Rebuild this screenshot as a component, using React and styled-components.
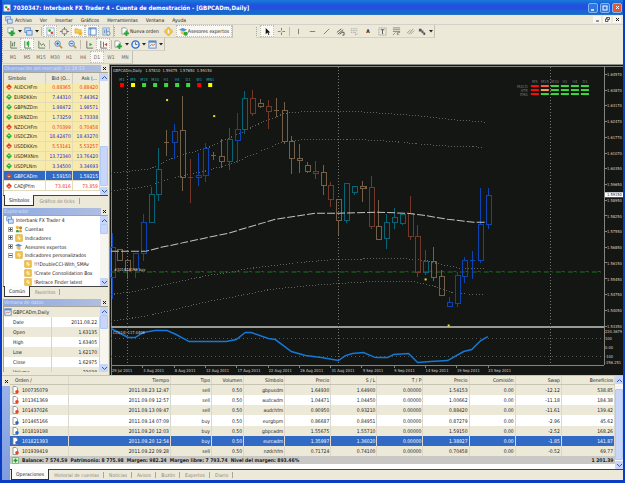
import React, { useState } from 'react'
import styled, { createGlobalStyle } from 'styled-components'

const GlobalStyle = createGlobalStyle`
    * { box-sizing: border-box; }
    body {
        margin: 0;
        background-color: #ece9d8;
        font-family: "DejaVu Sans Condensed", "Liberation Sans", sans-serif;
        font-size: 5px;
        line-height: 8px;
        color: #222;
    }
    button {
        font: inherit;
        color: inherit;
        border: none;
        background: none;
        padding: 0;
        margin: 0;
    }
    svg { display: block; flex: none; }
`;
const Window = styled.div`
    min-height: 100vh;
    display: flex;
    flex-direction: column;
    border: solid #0a3cc4;
    border-width: 0 2px 3px 2px;
    background-color: #ece9d8;
`;
const TitleBar = styled.header`
    height: 15px;
    display: flex;
    align-items: center;
    gap: 2px;
    padding: 0 1px;
    background: linear-gradient(#1c7ade 0, #1668d4 3px, #2450e2 5px, #2450e2 9px, #1668cc 11px, #1668cc 14px, #3a78c8 15px);
    color: white;
`;
const Title = styled.h1`
    flex: 1;
    margin: 0;
    font-size: 6px;
    font-weight: bold;
    white-space: nowrap;
`;
const CaptionButton = styled.button`
    width: 10px;
    height: 10px;
    display: grid;
    place-items: center;
    border: 1px solid #8ab4f0;
    border-radius: 2px;
    background-color: ${props => props.$close ? '#e8562c' : '#2a78e0'};
`;
const MenuBar = styled.nav`
    height: 10px;
    display: flex;
    align-items: center;
    gap: 8px;
    padding: 0 2px 0 3px;
    border-bottom: 1px solid #d4d0cc;
    & > svg { margin-right: -6px; }
`;
const MenuButton = styled.button`
    white-space: nowrap;
`;
const MdiButtons = styled.div`
    margin-left: auto;
    display: flex;
    gap: 2px;
    & button {
        width: 8px;
        height: 7px;
        display: grid;
        place-items: center;
        background-color: #f8f7f2;
    }
`;
const ToolbarRow = styled.div`
    height: 13px;
    display: flex;
    align-items: stretch;
`;
const Toolbar = styled.div`
    display: flex;
    align-items: center;
    border-right: 1px solid #c4c0b4;
    border-bottom: 1px solid #d4d0c4;
    margin-left: ${props => props.$apart ? '23px' : '0'};
    &::before {
        content: '';
        width: 2px;
        height: 9px;
        margin-right: 1px;
        border-left: 1px dotted #a8a498;
    }
`;
const Separator = styled.span`
    width: 1px;
    height: 9px;
    margin: 0 1px;
    background-color: #c0bcae;
`;
const ToolButton = styled.button`
    min-width: 14px;
    height: 12px;
    padding: 0 ${props => props.$labelled ? '3px' : '1px'};
    display: flex;
    align-items: center;
    justify-content: center;
    gap: ${props => props.$labelled ? '0' : '2px'};
    white-space: nowrap;
    color: ${props => props.$period ? '#666' : '#222'};
    ${props => props.$on && `
        background-color: #f9f8f3;
        outline: 1px dotted #c0bcb0;
        outline-offset: -1px;
    `}
`;
const Workspace = styled.main`
    flex: 1;
    display: flex;
    align-items: stretch;
`;
const Sidebar = styled.aside`
    width: 107px;
    flex: none;
    padding: 1px 1px 0 1px;
    display: flex;
    flex-direction: column;
    gap: 2px;
`;
const Panel = styled.section`
    display: flex;
    flex-direction: column;
`;
const PanelTitle = styled.h2`
    height: 7px;
    margin: 0;
    padding-left: 1px;
    display: flex;
    align-items: center;
    justify-content: space-between;
    font-size: 5px;
    line-height: 7px;
    font-weight: normal;
    white-space: nowrap;
    color: #dde3ee;
    background: linear-gradient(90deg, #8ea9e4, #b2bfdf);
    & button {
        width: 7px;
        height: 7px;
        display: grid;
        place-items: center;
        background-color: #ece9d8;
    }
`;
const PanelBody = styled.div`
    height: ${props => props.$height}px;
    display: flex;
    align-items: stretch;
    border: solid #a8a496;
    border-width: 1px 0 0 1px;
    background-color: white;
    overflow: hidden;
`;
const MarketTable = styled.table`
    flex: 1;
    align-self: flex-start;
    height: 118px;
    table-layout: fixed;
    border-collapse: collapse;
    & th {
        width: 27px;
        height: 10px;
        padding: 0 2px;
        font-weight: normal;
        text-align: right;
        background-color: #ece9d8;
        border-right: 1px solid #d0ccbe;
    }
    & th:first-child {
        width: 41px;
        text-align: left;
        padding-left: 4px;
    }
    & td {
        padding: 0 1px;
        text-align: right;
        border-right: 1px solid #e4dcb8;
        border-bottom: 1px solid #e4dcb8;
    }
`;
const MarketRow = styled.tr`
    color: ${props => props.$selected ? 'white' : props.$up ? '#2424d0' : '#f03020'};
    background-color: ${props => props.$selected ? '#316ac5' : props.$plain ? 'white' : '#f8ebaa'};
    & td:first-child {
        color: ${props => props.$selected ? 'white' : '#222'};
    }
`;
const SymbolCell = styled.span`
    display: flex;
    align-items: center;
    gap: 2px;
    padding-left: 1px;
`;
const ScrollTrack = styled.div`
    width: 8px;
    flex: none;
    display: flex;
    flex-direction: column;
    background-color: #f6f5f0;
`;
const ScrollArrow = styled.button`
    height: 8px;
    flex: none;
    display: grid;
    place-items: center;
    border-radius: 1px;
    background-color: #c6d5fa;
`;
const ScrollSpace = styled.div`
    flex: ${props => props.$grow} 0 0;
`;
const ScrollThumb = styled.div`
    flex: ${props => props.$grow} 0 0;
    border: 1px solid #b4c8f4;
    border-radius: 1px;
    background-color: #c8d6fb;
`;
const Tabs = styled.div`
    height: 11px;
    display: flex;
    align-items: stretch;
    border-top: 1px solid #444;
    padding-left: 1px;
`;
const Tab = styled.button`
    padding: 0 5px;
    white-space: nowrap;
    color: #8c887c;
    position: relative;
    &::after {
        content: '';
        position: absolute;
        right: 0;
        top: 2px;
        height: 6px;
        border-right: 1px solid #aaa698;
    }
    ${props => props.$active && `
        margin-top: -1px;
        padding: 0 4px;
        color: #222;
        background-color: #fcfcfa;
        border: solid #333;
        border-width: 0 1px 1px 1px;
        &&::after { display: none; }
    `}
`;
const Tree = styled.ul`
    flex: 1;
    min-width: 0;
    height: 70px;
    margin: 0;
    padding: 0 0 0 1px;
    list-style: none;
    display: grid;
    grid-auto-rows: 1fr;
    overflow: hidden;
`;
const TreeItem = styled.li`
    display: flex;
    align-items: center;
    gap: 2px;
    white-space: nowrap;
    padding-left: ${props => props.$level === 0 ? 1 : props.$level === 1 ? 3 : 19}px;
`;
const DataList = styled.div`
    flex: 1;
`;
const DataHeading = styled.div`
    height: 10px;
    display: flex;
    align-items: center;
    gap: 1px;
    background-color: #ece9d8;
`;
const DataTable = styled.table`
    width: 100%;
    border-collapse: collapse;
    table-layout: fixed;
    & th, & td {
        height: 10px;
        padding: 0 2px 0 9px;
        font-weight: normal;
        text-align: left;
        border-right: 1px solid #d8d5c8;
    }
    & td {
        padding-left: 0;
        text-align: right;
    }
    & tr:nth-child(even) {
        background-color: #ece9d8;
    }
`;
const ChartPane = styled.div`
    flex: 1;
    min-width: 0;
    background-color: #141614;
    border-top: 1px solid #8c8c88;
    border-left: 1px solid #8c8c88;
    & svg {
        width: 100%;
        height: 100%;
    }
`;
const Terminal = styled.section`
    display: flex;
    border-top: 1px solid #c8c4b8;
`;
const TerminalGrip = styled.div`
    width: 8px;
    flex: none;
    display: flex;
    flex-direction: column;
    background: linear-gradient(#9db5ea, #7f9ce0);
    & button {
        height: 10px;
        display: grid;
        place-items: center;
        background-color: #ece9d8;
    }
`;
const TerminalContent = styled.div`
    flex: 1;
    min-width: 0;
`;
const OrdersFrame = styled.div`
    display: flex;
    height: 93px;
    background-color: white;
`;
const OrdersTable = styled.table`
    flex: 1;
    align-self: flex-start;
    height: 88px;
    table-layout: fixed;
    border-collapse: collapse;
    white-space: nowrap;
    & th, & td {
        padding: 0 1px;
        font-weight: normal;
        text-align: right;
        border-right: 1px solid #dcd9cc;
    }
    & th {
        background-color: #ece9d8;
        border-bottom: 1px solid #c8c4b4;
    }
    & th:first-child {
        text-align: left;
        padding-left: 5px;
    }
    & tfoot td {
        font-weight: bold;
        border: none;
        background-color: #c9c8c4;
    }
`;
const OrderRow = styled.tr`
    color: ${props => props.$selected ? 'white' : '#222'};
    background-color: ${props => props.$selected ? '#316ac5' : props.$shaded ? '#ece9d8' : 'white'};
`;
const OrderCell = styled.span`
    display: flex;
    align-items: center;
    gap: 3px;
    padding-left: 1px;
`;

// toolbar drawings, all on a 10x10 grid
const shapes = {
    addChart: <><rect x="1" y="1" width="6" height="5" fill="#fff" stroke="#8aa" /><path d="M4 4h3v2h2v2H7v2H4V8H2V6h2z" fill="#22a832" /></>,
    windows: <><rect x="1" y="1" width="6" height="5" fill="#dbe8fa" stroke="#5a86c8" /><rect x="3" y="4" width="6" height="5" fill="#cfe0fa" stroke="#5a86c8" /></>,
    market: <><rect x="1" y="1" width="8" height="8" fill="#fff" stroke="#8ab0d8" /><circle cx="4" cy="4" r="1.5" fill="#28a838" /><circle cx="6.5" cy="6.5" r="1.5" fill="#e04830" /></>,
    target: <><circle cx="5" cy="5" r="3" fill="none" stroke="#777" /><path d="M5 0v3M5 7v3M0 5h3M7 5h3" stroke="#777" /></>,
    folder: <><path d="M1 2h3l1 1h3v4H1z" fill="#f4cc4c" stroke="#c8962c" strokeWidth=".5" /><path d="M7 4l1 2 2 .3-1.500 1.500.5 2L7 9 5 9.800l.4-2L4 6.300 6 6z" fill="#f8b428" /></>,
    indicator: <><rect x="1" y="1" width="8" height="8" fill="#f4c850" stroke="#d09828" strokeWidth=".8" /><path d="M5 2.500L3.500 5h3L5 7.500" fill="none" stroke="#fff8d8" strokeWidth="1.200" /></>,
    accounts: <><circle cx="3" cy="3" r="2" fill="#f0b040" /><circle cx="7" cy="3.500" r="2" fill="#c88030" /><path d="M1 9c0-4 4-4 4 0z" fill="#28a838" /><path d="M5 9c0-4 4-4 4 0z" fill="#e0a030" /></>,
    terminal: <><rect x="1" y="1" width="8" height="8" fill="#fff" stroke="#4a80c8" /><path d="M1 2h8M3 1v8" stroke="#4a80c8" /></>,
    tester: <><rect x="1" y="1" width="7" height="8" fill="#d4e2f4" stroke="#88a8d0" /><path d="M3 3v4M5 2v4" stroke="#5a84c0" /><circle cx="7" cy="7" r="2" fill="#e8eef8" stroke="#7088a8" /></>,
    order: <><path d="M1 1h4l2 2v5H1z" fill="#fff" stroke="#999" /><path d="M5 4h2v2h2v2H7v2H5V8H3V6h2z" fill="#22a832" /></>,
    diamond: <><path d="M5 0l5 5-5 5-5-5z" fill="#f8c83c" stroke="#c8902c" strokeWidth=".6" /><path d="M5 3v4" stroke="#fff" strokeWidth="1.500" /></>,
    expert: <><path d="M0 3l4-2 5 2-4 2z" fill="#4a90d8" /><path d="M2 4v3l3 2 2-1V5z" fill="#f0c050" /></>,
    expertOn: <><path d="M0 3l4-2 5 2-4 2z" fill="#4a90d8" /><path d="M2 4v3l3 2 2-1V5z" fill="#f0c050" /><circle cx="7.500" cy="7.500" r="2.300" fill="#28a838" /></>,
    bars: <path d="M2 1v8h7M4 3v4M3 6h1M6 2v5M6 3h1" fill="none" stroke="#5a7a5a" />,
    candles: <><path d="M2 1v8h7M6 1v7" fill="none" stroke="#4a7a4a" /><rect x="4" y="2" width="3" height="4" fill="#28b838" /></>,
    line: <path d="M2 1v8h7M3 3l2 3 2-2 2 3" fill="none" stroke="#5a7a5a" />,
    zoomIn: <><path d="M6 6l3 3" stroke="#c89838" strokeWidth="2" /><circle cx="4" cy="4" r="3" fill="#cfe2fa" stroke="#4a80c8" /><path d="M2.500 4h3M4 2.500v3" stroke="#2a60b8" /></>,
    zoomOut: <><path d="M6 6l3 3" stroke="#c89838" strokeWidth="2" /><circle cx="4" cy="4" r="3" fill="#cfe2fa" stroke="#4a80c8" /><path d="M2.500 4h3" stroke="#2a60b8" /></>,
    scroll: <><path d="M2 1v8h7" fill="none" stroke="#666" /><path d="M5 3l3 2-3 2z" fill="#28a838" /></>,
    shift: <><path d="M2 1v8h7M5 2v6" fill="none" stroke="#666" /><path d="M9 3L6 5l3 2z" fill="#d04830" /></>,
    clock: <><circle cx="5" cy="5" r="4" fill="#e4eefa" stroke="#2a68c8" strokeWidth="1.500" /><path d="M5 2.500V5h2" fill="none" stroke="#444" strokeWidth=".8" /></>,
    template: <><rect x="1" y="1" width="8" height="8" fill="#e8f0fa" stroke="#5a88c8" /><path d="M1 2h8" stroke="#5a88c8" strokeWidth="2" /><path d="M2 7l2-2 2 1 2-2" fill="none" stroke="#c86030" /></>,
    pointer: <path d="M3 1v7l2-2 1 3 1-.5-1-2.500h2z" fill="#111" />,
    cross: <path d="M5 1v3M5 6v3M1 5h3M6 5h3" stroke="#777" />,
    vline: <path d="M5 2v6" stroke="#777" />,
    hline: <path d="M2 5h6" stroke="#777" />,
    trend: <path d="M2 8l6-6" stroke="#777" />,
    channel: <path d="M1 6l5-4M2 8l6-5M4 8l4-3M7 6h2v3H7" fill="none" stroke="#555" />,
    grid: <path d="M1 2h7M1 4h7M1 6h6M6 6v3l3-2" fill="none" stroke="#999" strokeDasharray="1 1" />,
    label: <><rect x="1" y="1" width="8" height="8" fill="none" stroke="#888" strokeDasharray="1 1" /><path d="M3 3h4M5 3v5" stroke="#555" /></>,
    fibo: <path d="M1 1h8M1 3h8M1 5h8M1 9l3-3M6 9V6h3M6 8h2" fill="none" stroke="#888" />,
    strokes: <path d="M1 7l4-4M3 8l5-6M5 8l4-4" stroke="#999" />,
    arrows: <path d="M1 2h3v2h2v2h2v3H6V7H4V5H1z" fill="#555" />,
};
const Icon = ({ name, size = 9 }) => <svg width={size} height={size} viewBox="0 0 10 10">{shapes[name]}</svg>;
const Caret = () => <svg width="4" height="3" viewBox="0 0 4 3"><path d="M0 0h4L2 2.500z" fill="#222" /></svg>;
const Cross = ({ color = '#111' }) => <svg width="5" height="5" viewBox="0 0 5 5"><path d="M1 1l3 3M4 1L1 4" stroke={color} /></svg>;
const Badge = ({ up }) => (
    <svg width="6" height="6" viewBox="0 0 6 6">
        <path d="M3 0l3 3-3 3-3-3z" fill={up ? '#2cb43c' : '#e04828'} />
        <path d={up ? 'M3 1.500L4.500 3h-3z' : 'M3 4.500L1.500 3h3z'} fill="#fff" opacity=".6" />
    </svg>
);
const BalanceIcon = () => (
    <svg width="7" height="7" viewBox="0 0 7 7">
        <rect x=".5" y=".5" width="6" height="6" fill="#e8f4e4" stroke="#8ab88a" />
        <path d="M3.500 1.500v4M1.500 3.500h4" stroke="#18a028" strokeWidth="1.500" />
    </svg>
);
const OrderIcon = ({ side }) => (
    <svg width="7" height="8" viewBox="0 0 7 8">
        <path d="M1 .5h3l1.500 1.500v5.500H1z" fill="#fff" stroke="#888" strokeWidth=".8" />
        <circle cx="5" cy="5.800" r="1.800" fill={side === 'sell' ? '#e04828' : '#2868d0'} />
    </svg>
);

function Tool({ name, caret, label, ...rest }) {
    return (
        <ToolButton aria-label={label ? undefined : name} $labelled={Boolean(label)} {...rest}>
            {name && <Icon name={name} />}
            {label}
            {caret && <Caret />}
        </ToolButton>
    )
}

function Scrollbar({ before, thumb, after }) {
    return (
        <ScrollTrack>
            <ScrollArrow aria-label="Subir"><svg width="5" height="3" viewBox="0 0 5 3"><path d="M0 3l2.500-2.500L5 3" fill="none" stroke="#3c5a98" /></svg></ScrollArrow>
            <ScrollSpace $grow={before} />
            <ScrollThumb $grow={thumb} />
            <ScrollSpace $grow={after} />
            <ScrollArrow aria-label="Bajar"><svg width="5" height="3" viewBox="0 0 5 3"><path d="M0 0l2.500 2.500L5 0" fill="none" stroke="#3c5a98" /></svg></ScrollArrow>
        </ScrollTrack>
    )
}

function TabStrip({ names }) {
    const [active, setActive] = useState(names[0]);
    return (
        <Tabs role="tablist">
            {names.map(name => <Tab key={name} role="tab" $active={name === active} onClick={() => setActive(name)}>{name}</Tab>)}
        </Tabs>
    )
}

function Heading({ children }) {
    return <PanelTitle>{children}<button aria-label="Cerrar"><Cross /></button></PanelTitle>
}

const quotes = [
    ['AUDCHFm', '0.88365', '0.88420', false],
    ['EURDKKm', '7.44310', '7.44362', true],
    ['GBPNZDm', '1.98472', '1.98571', true],
    ['EURNZDm', '1.73259', '1.73338', true],
    ['NZDCHFm', '0.70399', '0.70458', false],
    ['USDCZKm', '18.42470', '18.43270', true],
    ['USDDKKm', '5.53141', '5.53257', false],
    ['USDMXNm', '13.72340', '13.76420', true],
    ['USDPLNm', '3.34500', '3.34693', true],
    ['GBPCADm', '1.59150', '1.59215', false],
    ['CADJPYm', '73.816', '73.859', false],
];

function MarketWatch() {
    return (
        <Panel>
            <Heading>Observación del mercado: 11:16:53</Heading>
            <PanelBody $height={123}>
                <MarketTable>
                    <thead><tr><th>Símbolo</th><th>Bid (O...</th><th>Ask (...</th></tr></thead>
                    <tbody>
                        {quotes.map(([symbol, bid, ask, up]) => (
                            <MarketRow key={symbol} $up={up} $selected={symbol === 'GBPCADm'} $plain={symbol === 'CADJPYm'}>
                                <td><SymbolCell><Badge up={up} />{symbol}</SymbolCell></td>
                                <td>{bid}</td>
                                <td>{ask}</td>
                            </MarketRow>
                        ))}
                    </tbody>
                </MarketTable>
                <Scrollbar before={68} thumb={40} after={1} />
            </PanelBody>
            <TabStrip names={['Símbolos', 'Gráfico de ticks']} />
        </Panel>
    )
}

const nodes = [
    ['Interbank FX Trader 4', 0, 'windows'],
    ['Cuentas', 1, 'accounts', '+'],
    ['Indicadores', 1, 'indicator', '+'],
    ['Asesores expertos', 1, 'expert', '+'],
    ['Indicadores personalizados', 1, 'indicator', '-'],
    ['!!!DoubleCCI-With_SMAv', 2, 'indicator'],
    ['!Create Consolidation Box', 2, 'indicator'],
    ['!Retrace Finder latest', 2, 'indicator'],
];

function Navigator() {
    return (
        <Panel>
            <Heading>Explorador</Heading>
            <PanelBody $height={71}>
                <Tree>
                    {nodes.map(([name, level, icon, sign]) => (
                        <TreeItem key={name} $level={level}>
                            {sign && <svg width="5" height="5" viewBox="0 0 5 5"><rect x=".5" y=".5" width="4" height="4" fill="#fff" stroke="#aaa" /><path d={sign === '+' ? 'M1 2.500h3M2.500 1v3' : 'M1 2.500h3'} stroke="#555" /></svg>}
                            <Icon name={icon} size={8} />
                            {name}
                        </TreeItem>
                    ))}
                </Tree>
                <Scrollbar before={0} thumb={8} after={46} />
            </PanelBody>
            <TabStrip names={['Común', 'Favoritos']} />
        </Panel>
    )
}

const dataRows = [['Date', '2011.08.22'], ['Open', '1.63135'], ['High', '1.63405'], ['Low', '1.62170'], ['Close', '1.62975'], ['Volume', '23038']];

function DataWindow() {
    return (
        <Panel>
            <Heading>Ventana de datos</Heading>
            <PanelBody $height={66}>
                <DataList>
                    <DataHeading><Icon name="template" size={8} />GBPCADm,Daily</DataHeading>
                    <DataTable>
                        <tbody>
                            {dataRows.map(([name, value]) => <tr key={name}><th scope="row">{name}</th><td>{value}</td></tr>)}
                        </tbody>
                    </DataTable>
                </DataList>
                <Scrollbar before={0} thumb={12} after={34} />
            </PanelBody>
        </Panel>
    )
}

// high, body top, body bottom, low, tint
const candles = [
    [233, 247, 277, 298, 'b'], [249, 249, 260, 260, 'o'], [260, 260, 270, 278, 'o'], [253, 253, 269, 277, 'b'],
    [214, 222, 253, 260, 'b'], [187, 194, 222, 222, 't'], [148, 169, 194, 200, 't'], [130, 142, 142, 155, 'o'],
    [124, 131, 142, 158, 'b'], [96, 130, 177, 190, 'o'], [159, 177, 177, 202, 'r'], [153, 175, 177, 185, 'b'],
    [143, 148, 175, 181, 'b'], [152, 155, 155, 159, 'o'], [139, 156, 161, 167, 'o'], [128, 139, 161, 169, 't'],
    [113, 129, 140, 162, 'b'], [91, 98, 129, 133, 't'], [90, 98, 113, 115, 'r'], [99, 103, 106, 107, 'o'],
    [100, 106, 111, 128, 'r'], [98, 110, 110, 116, 'o'], [102, 110, 141, 143, 'o'], [136, 141, 158, 173, 'o'],
    [144, 158, 160, 172, 'o'], [162, 165, 171, 172, 'o'], [161, 171, 173, 178, 'r'], [165, 172, 185, 194, 'o'],
    [182, 185, 199, 206, 'r'], [199, 199, 220, 234, 'o'], [183, 183, 220, 222, 't'], [186, 186, 192, 194, 't'],
    [181, 186, 188, 201, 'o'], [176, 187, 226, 228, 'r'], [200, 226, 239, 239, 'o'], [214, 222, 238, 248, 't'],
    [208, 217, 222, 228, 't'], [214, 214, 223, 224, 't'], [196, 213, 236, 239, 'r'], [225, 236, 272, 276, 'r'],
    [250, 261, 272, 274, 't'], [247, 261, 277, 280, 'o'], [270, 276, 295, 295, 'o'], [297, 302, 306, 306, 'b'],
    [272, 275, 303, 306, 'b'], [257, 260, 276, 282, 'b'], [251, 260, 260, 278, 'b'], [188, 224, 260, 262, 'b'],
    [188, 195, 224, 228, 'b'],
];
const tints = { b: '#0c44b4', t: '#066474', o: '#746048', r: '#743828' };
const bands = [
    '111,173 149,169 170,159 185,154 209,147 222,141 240,133 258,124 270,119 285,113 312,111 333,111 365,112 395,114 420,116 456,120 485,122',
    '111,191 149,186 172,178 209,170 222,166 240,160 258,152 279,143 295,140 333,139 372,140 400,142 420,144 450,146 482,147',
    '111,294 135,291 161,285 180,281 208,275 228,272 250,268 275,265 300,262 338,259 400,258 425,260 440,264 460,268 485,268',
    '111,321 148,315 175,309 208,301 241,295 270,289 300,286 338,283 375,281 412,281 430,285 452,292 470,294 483,294',
];
const periods = [['M1', 'red'], ['M5', 'yellow'], ['M15', '#40d840'], ['M30', '#40d840'], ['H1', '#40d840'], ['H4', '#40d840'], ['D1', '#40d840'], ['W1', 'red'], ['MN1', 'yellow']];
const prices = ['1.64570', '1.63870', '1.63170', '1.62470', '1.61770', '1.61070', '1.60350', '1.59650', '1.58950', '1.58250', '1.57550', '1.56850', '1.56150', '1.55450', '1.54750', '1.54050', '1.53350'];
const dates = ['29 Jul 2011', '3 Aug 2011', '8 Aug 2011', '12 Aug 2011', '17 Aug 2011', '22 Aug 2011', '26 Aug 2011', '31 Aug 2011', '5 Sep 2011', '9 Sep 2011', '14 Sep 2011', '19 Sep 2011', '23 Sep 2011'];
const levels = [['220.3679', 332], ['100', 339], ['0.00', 348], ['-100', 357], ['-256.251', 363]];
const signals = [['MACD', 85], ['STR', 89], ['EMA', 93]];
const signalColor = (row, col) => col === 0 ? '#f81008' : col === 1 && row < 2 ? (row === 0 ? '#f86040' : '#f8a060') : '#40d840';

function Chart() {
    return (
        <ChartPane>
            <svg viewBox="110 65 512 309" preserveAspectRatio="xMinYMin meet" fontSize="4" fill="#d4d4d0" role="img" aria-label="GBPCADm, Daily">
                <g stroke="#84847e" fill="none" shapeRendering="crispEdges">
                    <path d="M111.500 374V66.500H622M603.500 66V364.500M111 364.500H603" />
                    <path d="M111 326H603" stroke="#9a9a94" strokeWidth="2" />
                    <path d="M127.500 73V364M338.500 67V364M549.500 67V364" stroke="#787872" strokeDasharray="1 2" />
                    <path d="M111 337.500H603M111 355.500H603" stroke="#55554f" strokeDasharray="1 3" />
                    {bands.map(points => <polyline key={points} points={points} stroke="#62625c" strokeDasharray="1 2" />)}
                    {prices.map((p, i) => <path key={p} d={`M603 ${Math.round(74 + i * 15.7)}.5h3`} />)}
                    {dates.map((d, i) => <path key={d} d={`M${Math.round(111 + i * 31.3)}.5 364v3`} />)}
                </g>
                <path d="M111 271.500H603" stroke="#187818" strokeDasharray="5 3 1 3" />
                <path d="M117 271H603" stroke="#b02010" strokeDasharray="2 10" />
                <g fill="none" shapeRendering="crispEdges">
                    {candles.map(([high, top, bottom, low, tint], i) => {
                        const x = Math.round(111.5 + i * 7.82) + 0.5;
                        return (
                            <g key={i} stroke={tints[tint]}>
                                <path d={`M${x} ${high}V${top}M${x} ${bottom}V${low + 1}`} />
                                {bottom - top < 2
                                    ? <path d={`M${x - 2.5} ${top + 0.5}h5`} />
                                    : <rect x={x - 2} y={top + 0.5} width="5" height={bottom - top} />}
                            </g>
                        )
                    })}
                </g>
                <polyline
                    points="111,251 145,251 161,247 185,242 208,237 228,233 241,229 258,224 275,219 295,216 315,213 338,213 377,212 407,213 423,215 447,219 473,222 485,222"
                    fill="none" stroke="#c0c0ba" strokeDasharray="8 2"
                />
                <polyline
                    points="111,328 128,337 135,337 143,332 155,330 167,330 176,334 189,341 205,341 226,341 236,339 245,332 251,332 268,338 275,339 291,351 305,355 321,357 338,360 345,355 352,353 363,352 375,357 387,357 393,354 408,353 417,362 430,361 447,360 463,351 471,349 480,340 487,336"
                    fill="none" stroke="#1478d8" strokeWidth="1.500"
                />
                <g fill="#f4e020">
                    {[[166, 99], [213, 115], [424, 278], [447, 324]].map(([x, y]) => <rect key={x} x={x} y={y} width="2" height="2" />)}
                </g>
                <text x="113" y="72">GBPCADm,Daily&nbsp;&nbsp; 1.57810&nbsp; 1.59475&nbsp; 1.57650&nbsp; 1.59150</text>
                <text x="114" y="271">#101819198 buy</text>
                <text x="113" y="333">CCI(14) 117.0406</text>
                {periods.map(([name, color], i) => (
                    <g key={name}>
                        <text x={122 + i * 11} y="81" textAnchor="middle" fill="#20a0a0">{name}</text>
                        <rect x={120 + i * 11} y="83" width="4" height="4" fill={color} />
                    </g>
                ))}
                <g fill="#77716c">
                    {['M5', 'M15', 'M30', 'H1', 'H4', 'D1'].map((name, i) => <text key={name} x={534 + i * 10} y="83" textAnchor="middle">{name}</text>)}
                    {signals.map(([name, y], row) => (
                        <g key={name}>
                            <text x="527" y={y + 3} textAnchor="end">{name}</text>
                            {[0, 1, 2, 3, 4, 5].map(col => <rect key={col} x={530 + col * 10} y={y} width="8" height="2" fill={signalColor(row, col)} />)}
                        </g>
                    ))}
                </g>
                {prices.map((p, i) => <text key={p} x="606" y={76 + i * 15.7}>{p}</text>)}
                <rect x="604" y="192" width="18" height="5" fill="#fff" />
                <text x="606" y="196" fill="#111">1.59150</text>
                {levels.map(([name, y]) => <text key={name} x="604" y={y}>{name}</text>)}
                {dates.map((d, i) => <text key={d} x={112 + i * 31.3} y="371">{d}</text>)}
            </svg>
        </ChartPane>
    )
}

const columns = [['Orden   /', 58], ['Tiempo', 102], ['Tipo', 41], ['Volumen', 32], ['Símbolo', 41], ['Precio', 46], ['S / L', 46], ['T / P', 46], ['Precio', 46], ['Comisión', 46], ['Swap', 46], ['Beneficios', 53]];
const orders = [
    ['100735079', '2011.08.23 12:47', 'sell', '0.50', 'gbpusdm', '1.64930', '1.64900', '0.00000', '1.54153', '0.00', '-12.12', '538.85'],
    ['101361369', '2011.09.09 12:57', 'sell', '0.50', 'audcadm', '1.04471', '1.04450', '0.00000', '1.00662', '0.00', '-11.18', '184.38'],
    ['101437026', '2011.09.13 09:47', 'sell', '0.50', 'audchfm', '0.90950', '0.93210', '0.00000', '0.88420', '0.00', '-11.61', '139.42'],
    ['101465166', '2011.09.14 07:09', 'buy', '0.50', 'eurgbpm', '0.86687', '0.84951', '0.00000', '0.87279', '0.00', '-2.96', '45.62'],
    ['101819198', '2011.09.20 12:03', 'buy', '0.50', 'gbpcadm', '1.55675', '1.55710', '0.00000', '1.59150', '0.00', '-2.52', '168.26'],
    ['101821393', '2011.09.20 12:54', 'buy', '0.50', 'eurcadm', '1.35997', '1.36020', '0.00000', '1.38927', '0.00', '-1.85', '141.87'],
    ['101939419', '2011.09.22 09:28', 'sell', '0.50', 'nzdchfm', '0.71724', '0.74100', '0.00000', '0.70458', '0.00', '-0.52', '69.77'],
];

function Orders() {
    const [selected, setSelected] = useState('101821393');
    return (
        <OrdersFrame>
            <OrdersTable>
                <colgroup>{columns.map(([name, width], i) => <col key={i} style={{ width }} />)}</colgroup>
                <thead><tr>{columns.map(([name], i) => <th key={i}>{name}</th>)}</tr></thead>
                <tbody>
                    {orders.map(([id, ...cells], row) => (
                        <OrderRow key={id} $selected={id === selected} $shaded={row % 2 === 0} onClick={() => setSelected(id)}>
                            <td><OrderCell><OrderIcon side={cells[1]} />{id}</OrderCell></td>
                            {cells.map((cell, i) => <td key={i}>{cell}</td>)}
                        </OrderRow>
                    ))}
                </tbody>
                <tfoot>
                    <tr>
                        <td colSpan="11"><OrderCell><BalanceIcon />Balance: 7 574.59&nbsp; Patrimonio: 8 775.98&nbsp; Margen: 982.24&nbsp; Margen libre: 7 793.74&nbsp; Nivel del margen: 893.46%</OrderCell></td>
                        <td>1 201.39</td>
                    </tr>
                </tfoot>
            </OrdersTable>
            <Scrollbar before={5} thumb={69} after={1} />
        </OrdersFrame>
    )
}

export default function App() {
    const [period, setPeriod] = useState('D1');
    return (
        <>
            <GlobalStyle />
            <Window>
                <TitleBar>
                    <Icon name="market" size={8} />
                    <Title>7030347: Interbank FX Trader 4 - Cuenta de demostración - [GBPCADm,Daily]</Title>
                    <CaptionButton aria-label="Minimizar"><svg width="6" height="6" viewBox="0 0 6 6"><path d="M1 5h3" stroke="#fff" strokeWidth="1.500" /></svg></CaptionButton>
                    <CaptionButton aria-label="Maximizar"><svg width="6" height="6" viewBox="0 0 6 6"><rect x="1" y="1" width="4" height="4" fill="none" stroke="#fff" /></svg></CaptionButton>
                    <CaptionButton aria-label="Cerrar" $close><Cross color="#fff" /></CaptionButton>
                </TitleBar>
                <MenuBar>
                    <Icon name="windows" size={8} />
                    {['Archivo', 'Ver', 'Insertar', 'Gráficos', 'Herramientas', 'Ventana', 'Ayuda'].map(item => <MenuButton key={item}>{item}</MenuButton>)}
                    <MdiButtons>
                        <button aria-label="Minimizar ventana"><svg width="5" height="5" viewBox="0 0 5 5"><path d="M1 4h3" stroke="#333" /></svg></button>
                        <button aria-label="Restaurar ventana"><svg width="5" height="5" viewBox="0 0 5 5"><path d="M1.500 2V.5h3v2H3M.5 2h2.500v2.500H.5z" fill="none" stroke="#333" strokeWidth=".8" /></svg></button>
                        <button aria-label="Cerrar ventana"><Cross /></button>
                    </MdiButtons>
                </MenuBar>
                <ToolbarRow>
                    <Toolbar>
                        <Tool name="addChart" caret />
                        <Tool name="windows" caret />
                        <Separator />
                        <Tool name="market" $on />
                        <Tool name="target" />
                        <Tool name="folder" $on />
                        <Tool name="terminal" $on />
                        <Tool name="tester" />
                    </Toolbar>
                    <Toolbar>
                        <Tool name="order" label="Nueva orden" />
                        <Tool name="diamond" />
                        <Tool name="expertOn" label="Asesores expertos" $on />
                    </Toolbar>
                    <Toolbar $apart>
                        <Tool name="pointer" $on />
                        <Tool name="cross" />
                        <Separator />
                        {['vline', 'hline', 'trend', 'channel', 'grid'].map(name => <Tool key={name} name={name} />)}
                        <ToolButton><b>A</b></ToolButton>
                        {['label', 'fibo', 'strokes'].map(name => <Tool key={name} name={name} />)}
                        <Tool name="arrows" caret />
                    </Toolbar>
                </ToolbarRow>
                <ToolbarRow>
                    <Toolbar>
                        <Tool name="bars" />
                        <Tool name="candles" $on />
                        <Tool name="line" />
                        <Separator />
                        <Tool name="zoomIn" />
                        <Tool name="zoomOut" />
                        <Separator />
                        <Tool name="scroll" />
                        <Tool name="shift" $on />
                        <Separator />
                        <Tool name="order" caret />
                        <Tool name="clock" caret />
                        <Tool name="template" caret />
                    </Toolbar>
                </ToolbarRow>
                <ToolbarRow>
                    <Toolbar>
                        {['M1', 'M5', 'M15', 'M30', 'H1', 'H4', 'D1', 'W1', 'MN'].map(name => (
                            <ToolButton key={name} $period $on={name === period} onClick={() => setPeriod(name)}>{name}</ToolButton>
                        ))}
                    </Toolbar>
                </ToolbarRow>
                <Workspace>
                    <Sidebar>
                        <MarketWatch />
                        <Navigator />
                        <DataWindow />
                    </Sidebar>
                    <Chart />
                </Workspace>
                <Terminal>
                    <TerminalGrip><button aria-label="Cerrar terminal"><Cross /></button></TerminalGrip>
                    <TerminalContent>
                        <Orders />
                        <TabStrip names={['Operaciones', 'Historial de cuentas', 'Noticias', 'Avisos', 'Buzón', 'Expertos', 'Diario']} />
                    </TerminalContent>
                </Terminal>
            </Window>
        </>
    )
}
